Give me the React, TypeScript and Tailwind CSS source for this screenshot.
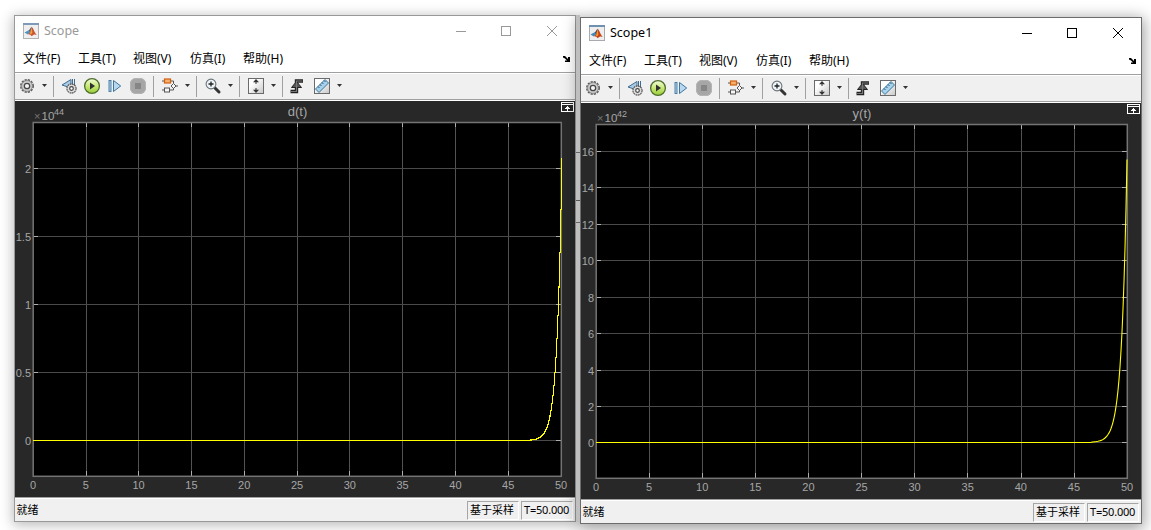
import type { ReactNode } from "react";

type Tick = { label: string; y: number };

interface ScopeProps {
  name: string;
  active: boolean;
  signal: string;
  exponent: string;
  left: number;
  ticks: Tick[];
  zero: number;
  stepped: boolean;
}

const RIGHT = 546;
const TOP = 21;
const BOTTOM = 375;

const menus = [
  { label: "文件(F)", width: "w-[55px]" },
  { label: "工具(T)", width: "w-[55px]" },
  { label: "视图(V)", width: "w-[57px]" },
  { label: "仿真(I)", width: "w-[53px]" },
  { label: "帮助(H)", width: "w-[60px]" },
];

const dTicks: Tick[] = [
  { label: "2", y: 67 },
  { label: "1.5", y: 135 },
  { label: "1", y: 203 },
  { label: "0.5", y: 271 },
  { label: "0", y: 339 },
];

const yTicks: Tick[] = [
  { label: "16", y: 48 },
  { label: "14", y: 84 },
  { label: "12", y: 121 },
  { label: "10", y: 157 },
  { label: "8", y: 194 },
  { label: "6", y: 230 },
  { label: "4", y: 267 },
  { label: "2", y: 303 },
  { label: "0", y: 339 },
];

// Exponential growth that reaches the full amplitude at the right edge
function curvePath(left: number, zero: number, stepped: boolean) {
  const amplitude = 283;
  const rate = stepped ? 0.204 : 0.188;
  const base = zero + 0.5;
  let d = `M${left} ${base} H${RIGHT - 36}`;
  for (let i = 35; i >= 0; i--) {
    const x = RIGHT - i + (stepped ? 0.5 : 0);
    const y = base - amplitude * Math.exp(-rate * i);
    d += stepped ? ` H${x} V${y.toFixed(1)}` : ` L${x} ${y.toFixed(1)}`;
  }
  return d;
}

function MatlabIcon({ faded }: { faded: boolean }) {
  return (
    <svg width="16" height="16" viewBox="0 0 16 16" className={faded ? "opacity-90" : ""}>
      <rect x="0.5" y="0.5" width="15" height="15" fill="#eeeeee" stroke="#a8aaad" />
      <rect x="0" y="0" width="16" height="2" fill="#6f91b0" />
      <path d="M1.5 9.6 5.2 7.6 7 9.4 4.8 11.4Z" fill="#3d87bb" />
      <path d="M5.2 7.6C6.7 7.2 7.5 4.5 8.7 3.8L7.2 9.4Z" fill="#285784" />
      <path d="M8.7 3.8C10.4 5.2 11.4 9.6 13.7 12 11.7 11 10.5 11.3 8.7 13.3 7.9 12 6.6 11.2 4.8 11.4 7.7 9.7 7.4 6 8.7 3.8Z" fill="#c54218" />
      <path d="M8.7 4.2 9.4 9.8 8 11.5 6.9 10.2C8.2 8.5 8 6 8.7 4.2Z" fill="#f19a2c" />
    </svg>
  );
}

function Icon({ children, className = "" }: { children: ReactNode; className?: string }) {
  return (
    <svg width="18" height="18" viewBox="0 0 18 18" fill="none" className={`shrink-0 ${className}`}>
      {children}
    </svg>
  );
}

function Arrow() {
  return (
    <svg width="5" height="3" viewBox="0 0 5 3" className="ml-[6px] shrink-0">
      <path d="M0 0H5L2.5 3Z" fill="#333333" />
    </svg>
  );
}

function Separator() {
  return <div className="mt-[2px] ml-[6px] h-[21px] w-px shrink-0 bg-[#a0a0a0]" />;
}

function Toolbar() {
  return (
    <div className="flex h-[25px] items-center bg-[#f0f0f0] pb-[2px]">
      <Icon className="ml-[3px]">
        <circle cx="9" cy="9" r="6.2" stroke="#5a5a5a" strokeWidth="1.5" strokeDasharray="2.2 1.05" />
        <circle cx="9" cy="9" r="5.4" fill="#d2d2d2" stroke="#6c6c6c" strokeWidth="0.7" />
        <circle cx="9" cy="9" r="2.7" fill="#f5f5f5" stroke="#484848" strokeWidth="1.3" />
      </Icon>
      <Arrow />
      <Separator />
      <Icon className="ml-[6px]">
        <path d="M11 2.5V11L2 8Z" fill="#a8cce8" stroke="#416b8d" />
        <path d="M12.5 2V8M14.5 2V8" stroke="#416b8d" />
        <circle cx="11.5" cy="11.5" r="4.5" fill="#dddddd" stroke="#555555" strokeWidth="1.3" strokeDasharray="1.8 0.55" />
        <circle cx="11.5" cy="11.5" r="3.8" fill="#dcdcdc" />
        <circle cx="11.5" cy="11.5" r="1.8" fill="#ffffff" stroke="#444444" strokeWidth="1.2" />
      </Icon>
      <Icon className="ml-[5px]">
        <defs>
          <linearGradient id="run" x1="0" y1="0" x2="0" y2="1">
            <stop offset="0" stopColor="#f4fcdd" />
            <stop offset="0.5" stopColor="#c9e978" />
            <stop offset="1" stopColor="#96cb35" />
          </linearGradient>
        </defs>
        <circle cx="9" cy="9" r="7.4" fill="url(#run)" stroke="#4e6e2b" strokeWidth="1.3" />
        <path d="M7 5.5 12 9 7 12.5Z" fill="#303030" />
      </Icon>
      <Icon className="ml-[5px]">
        <rect x="3" y="3.5" width="2" height="11" fill="#afd5ef" stroke="#41759d" strokeWidth="0.9" />
        <path d="M7.5 3.5 14.7 9 7.5 14.5Z" fill="#b6d9f1" stroke="#41759d" />
      </Icon>
      <Icon className="ml-[5px]">
        <rect x="1" y="1" width="16" height="16" rx="6" fill="#a6a6a6" />
        <rect x="1.5" y="1.5" width="15" height="15" rx="5.5" stroke="#b4b4b4" />
        <rect x="6" y="6" width="6" height="6" fill="#868686" />
      </Icon>
      <Separator />
      <Icon className="ml-[7px]">
        <path d="M1 4H3M9 4H12.5V6.5M1 13H3M9 13H12.5V10.5" stroke="#555555" />
        <rect x="3.5" y="2" width="6" height="4" fill="#f6b06c" stroke="#d4600f" strokeWidth="1.2" />
        <rect x="3.5" y="11" width="5" height="4" fill="#f7f7f7" stroke="#555555" />
        <path d="M12.5 6.5 15 9 12.5 11.5 10 9ZM15 9H17" fill="#f7f7f7" stroke="#555555" />
      </Icon>
      <Arrow />
      <Separator />
      <Icon className="ml-[7px]">
        <path d="M10.5 10.5 15 15" stroke="#333333" strokeWidth="3" strokeLinecap="round" />
        <circle cx="7" cy="7" r="4.9" fill="#eef5fa" stroke="#6d7478" strokeWidth="1.1" />
        <path d="M4.5 7H9.5M7 4.5V9.5" stroke="#222222" strokeWidth="1.3" />
      </Icon>
      <Arrow />
      <Separator />
      <Icon className="ml-[7px]">
        <defs>
          <linearGradient id="paper" x1="0" y1="0" x2="1" y2="1">
            <stop offset="0.3" stopColor="#ffffff" />
            <stop offset="1" stopColor="#c8c8c8" />
          </linearGradient>
        </defs>
        <rect x="1.5" y="1.5" width="15" height="15" fill="url(#paper)" stroke="#6b6b6b" />
        <path d="M9 2 12 5.2H6ZM9 16 12 12.8H6Z" fill="#333333" />
        <path d="M9 5V7M9 11V13" stroke="#333333" />
      </Icon>
      <Arrow />
      <Separator />
      <Icon className="ml-[5px]">
        <path d="M2.5 14.5H8.5V4H15" stroke="#222222" strokeWidth="3.4" />
        <path d="M8.5 4.5 13.5 10.5H3.5Z" fill="#555555" stroke="#222222" />
        <path d="M3 14.5H8.5V4H14.5" stroke="#777777" strokeWidth="1.2" />
      </Icon>
      <Icon className="ml-[7px]">
        <rect x="1.5" y="1.5" width="15" height="15" fill="url(#paper)" stroke="#6b6b6b" />
        <path d="M2.5 12 12 2.5 15.5 6 6 15.5Z" fill="#a7d2ec" stroke="#3d7397" />
        <path d="M5 9.5 6.5 11M7 7.5 8.5 9M9 5.5 10.5 7M11 3.5 12.5 5" stroke="#28597c" />
      </Icon>
      <Arrow />
    </div>
  );
}

function Plot({ signal, exponent, left, ticks, zero, stepped }: Omit<ScopeProps, "name" | "active">) {
  const step = (RIGHT - left) / 10;
  return (
    <svg width="560" height="396" viewBox="0 0 560 396" className="block bg-[#282828] font-['Liberation_Sans',Arial,sans-serif]">
      <rect x={left} y={TOP} width={RIGHT - left} height={BOTTOM - TOP} fill="#000000" />
      <g shapeRendering="crispEdges">
        {Array.from({ length: 9 }, (_, i) => {
          const x = Math.floor(left + step * (i + 1) + 0.2) + 0.5;
          return (
            <g key={i}>
              <path d={`M${x} ${TOP}V${BOTTOM}`} stroke="#525252" />
              <path d={`M${x} ${TOP}v5M${x} ${BOTTOM}v-5`} stroke="#afafaf" />
            </g>
          );
        })}
        {ticks.map(({ label, y }) => (
          <g key={label}>
            <path d={`M${left} ${y + 0.5}H${RIGHT}`} stroke="#4a4a4a" />
            <path d={`M${left} ${y + 0.5}h5M${RIGHT} ${y + 0.5}h-5`} stroke="#afafaf" />
          </g>
        ))}
      </g>
      <rect x={left + 0.2} y={TOP + 0.5} width={RIGHT - left + 0.1} height={BOTTOM - TOP - 0.2} fill="none" stroke="#747474" strokeWidth="1.5" />
      <path d={curvePath(left, zero, stepped)} fill="none" stroke="#ffff00" strokeWidth="1.1" shapeRendering={stepped ? "crispEdges" : "auto"} />

      <g fill="#a6a6a6" fontSize="11">
        {Array.from({ length: 11 }, (_, i) => (
          <text key={i} x={left + step * i} y={BOTTOM + 13} textAnchor="middle">{i * 5}</text>
        ))}
        {ticks.map(({ label, y }) => (
          <text key={label} x={left - 2} y={y + 4.5} textAnchor="end">{label}</text>
        ))}
        <text x={left + 1} y="19" fontSize="11" fill="#777777">×</text>
        <text x={left + 8.5} y="18.5" fontSize="11.5">10</text>
        <text x={left + 21} y="13.5" fontSize="9">{exponent}</text>
        <text x={(left + RIGHT) / 2 + 0.5} y="15" fontSize="13" textAnchor="middle">{signal}</text>
      </g>

      {/* maximize axes button */}
      <g stroke="#ffffff" shapeRendering="crispEdges">
        <rect x="546.5" y="1.5" width="12" height="9" fill="none" />
        <path d="M546 3.5H559" />
        <path d="M552.5 5V10M551 6.5H554M550 7.5H555" />
      </g>
    </svg>
  );
}

function ScopeWindow({ name, active, ...plot }: ScopeProps) {
  return (
    <div
      className={`h-[507px] w-[562px] shrink-0 border bg-white ${
        active
          ? "relative mt-[2px] border-[#6c6c6c] shadow-[0_3px_14px_2px_rgba(0,0,0,0.38)]"
          : "border-[#999999] shadow-[0_2px_12px_1px_rgba(0,0,0,0.28)]"
      }`}
    >
      <div className="flex h-[30px] items-center pl-[8px]">
        <MatlabIcon faded={!active} />
        <span className={`ml-[5px] w-[60px] text-[12.5px] leading-[16px] ${active ? "text-black" : "text-[#999999]"}`}>{name}</span>
        <svg width="104" height="12" viewBox="0 0 104 12" className="mr-[16px] ml-auto" stroke={active ? "#000000" : "#999999"} fill="none">
          <path d="M1 6.5H11" shapeRendering="crispEdges" />
          <rect x="46.5" y="1.5" width="9" height="9" shapeRendering="crispEdges" />
          <path d="M92 1 102 11M102 1 92 11" />
        </svg>
      </div>
      <div className="flex h-[27px] items-center border-b border-[#a0a0a0] pl-[8px] text-[12px] leading-[18px] text-black">
        {menus.map((menu) => (
          <span key={menu.label} className={`shrink-0 whitespace-nowrap ${menu.width}`}>{menu.label}</span>
        ))}
        <svg width="7" height="6" viewBox="0 0 7 6" className="mr-[5px] ml-auto">
          <path d="M0 0H2L5 3V1H7V6H2V4.5H4L2 2.5 0 1.5Z" fill="#000000" />
        </svg>
      </div>
      <div className="border-t border-b border-white border-b-[#a0a0a0]">
        <Toolbar />
      </div>
      <div className="h-px bg-white" />
      <Plot {...plot} />
      <div className="flex h-[24px] border-t border-[#a0a0a0] bg-[#f0f0f0] text-[11px] leading-[16px] text-black">
        <div className="flex flex-1 border-t border-white pt-[2px]">
          <span className="mt-[1px] ml-[1.5px]">就绪</span>
          <div className="mr-[2px] ml-auto h-[19px] w-[52px] border border-[#a6a6a6] border-r-white border-b-white pl-[2px] whitespace-nowrap">基于采样</div>
          <div className="mr-[2px] h-[19px] w-[52px] border border-[#a6a6a6] border-r-white border-b-white pl-[2px] tracking-[-0.2px] whitespace-nowrap">T=50.000</div>
        </div>
      </div>
    </div>
  );
}

export default function App() {
  return (
    <div className="flex h-[530px] w-[1151px] items-start overflow-hidden bg-white pt-[15px] pl-[14px] font-['Noto_Sans','Noto_Sans_CJK_SC',sans-serif]">
      <ScopeWindow name="Scope" active={false} signal="d(t)" exponent="44" left={18} ticks={dTicks} zero={339} stepped />
      {/* strip of the desktop seen between the two windows */}
      <div className="relative z-10 flex h-[507px] w-[4px] shrink-0 flex-col bg-[#bfbfbf]">
        <div className="mt-[137px] h-px bg-[#666666]" />
        <div className="mt-[47px] h-px bg-[#555555]" />
        <div className="mt-[21px] h-px bg-[#666666]" />
      </div>
      <ScopeWindow name="Scope1" active signal="y(t)" exponent="42" left={15} ticks={yTicks} zero={339} stepped={false} />
    </div>
  );
}
